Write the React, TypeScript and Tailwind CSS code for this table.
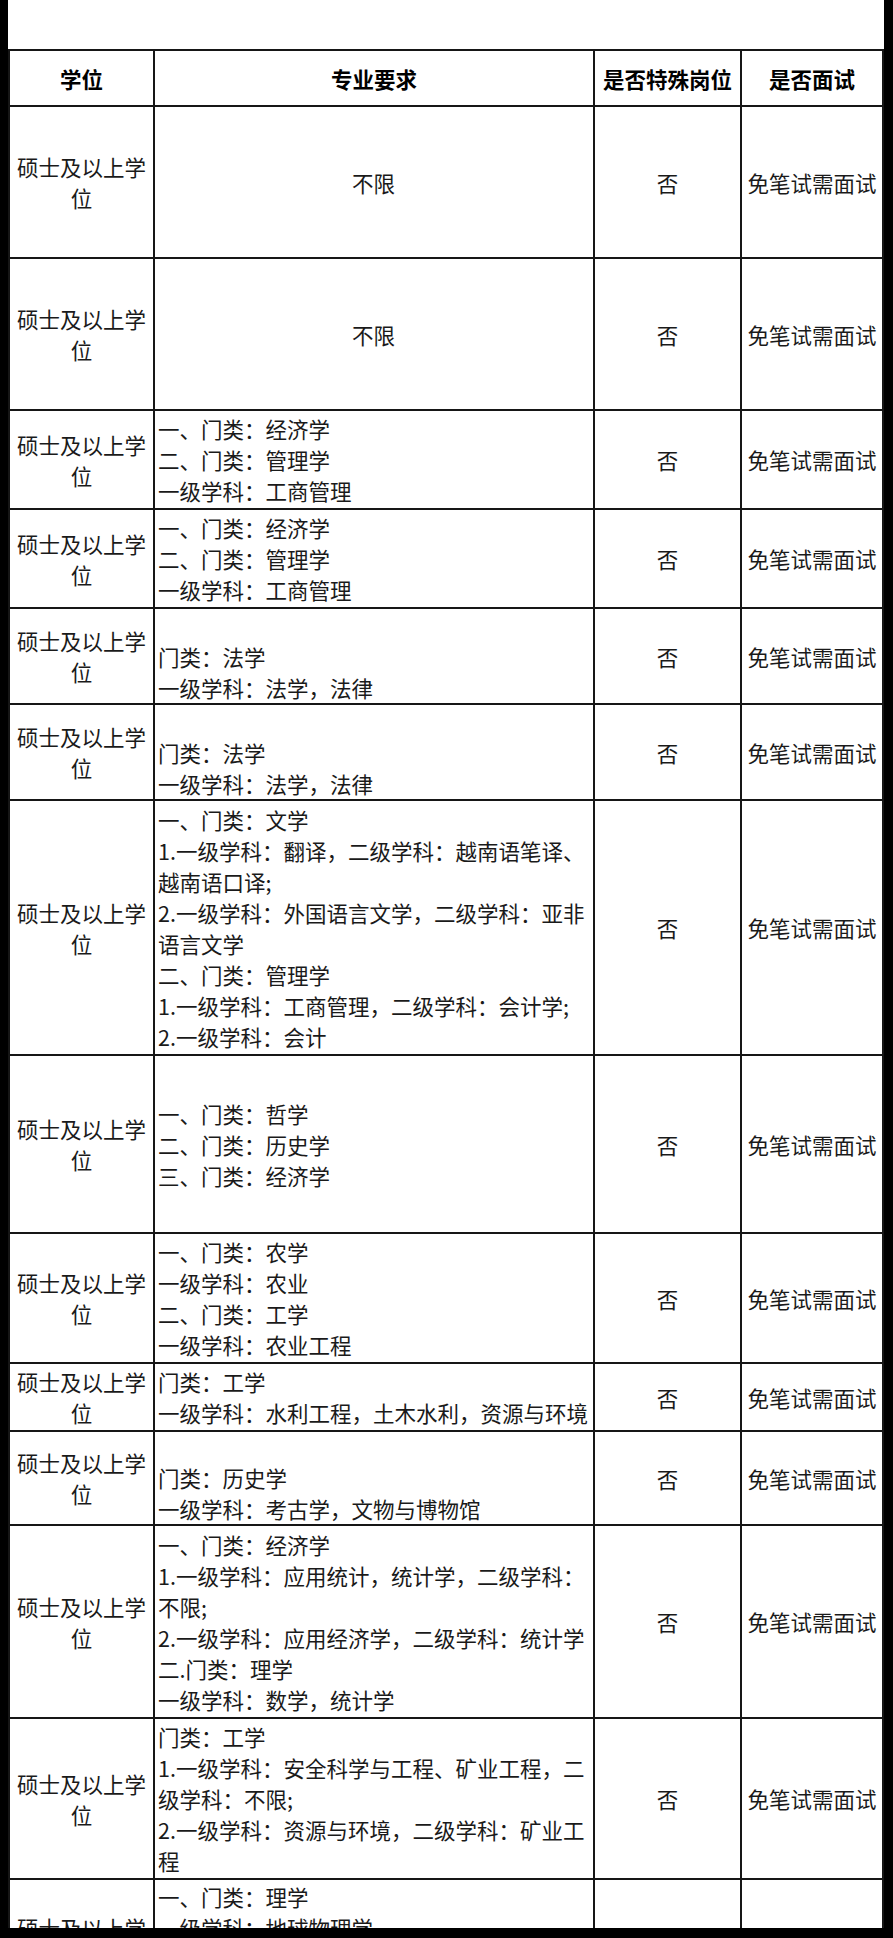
type Row = {
  h: string;
  major: string[];
  center?: boolean;
  valign?: string;
};

const rows: Row[] = [
  { h: 'h-[152px]', major: ['不限'], center: true },
  { h: 'h-[152px]', major: ['不限'], center: true },
  { h: 'h-[99px]', major: ['一、门类：经济学', '二、门类：管理学', '一级学科：工商管理'] },
  { h: 'h-[99px]', major: ['一、门类：经济学', '二、门类：管理学', '一级学科：工商管理'] },
  { h: 'h-[96px]', major: ['门类：法学', '一级学科：法学，法律'], valign: 'align-bottom' },
  { h: 'h-[96px]', major: ['门类：法学', '一级学科：法学，法律'], valign: 'align-bottom' },
  {
    h: 'h-[255px]',
    major: [
      '一、门类：文学',
      '1.一级学科：翻译，二级学科：越南语笔译、越南语口译;',
      '2.一级学科：外国语言文学，二级学科：亚非语言文学',
      '二、门类：管理学',
      '1.一级学科：工商管理，二级学科：会计学;',
      '2.一级学科：会计',
    ],
  },
  { h: 'h-[178px]', major: ['一、门类：哲学', '二、门类：历史学', '三、门类：经济学'] },
  { h: 'h-[130px]', major: ['一、门类：农学', '一级学科：农业', '二、门类：工学', '一级学科：农业工程'] },
  { h: 'h-[68px]', major: ['门类：工学', '一级学科：水利工程，土木水利，资源与环境'] },
  { h: 'h-[94px]', major: ['门类：历史学', '一级学科：考古学，文物与博物馆'], valign: 'align-bottom' },
  {
    h: 'h-[193px]',
    major: [
      '一、门类：经济学',
      '1.一级学科：应用统计，统计学，二级学科：不限;',
      '2.一级学科：应用经济学，二级学科：统计学',
      '二.门类：理学',
      '一级学科：数学，统计学',
    ],
  },
  {
    h: 'h-[161px]',
    major: [
      '门类：工学',
      '1.一级学科：安全科学与工程、矿业工程，二级学科：不限;',
      '2.一级学科：资源与环境，二级学科：矿业工程',
    ],
  },
  { h: 'h-[128px]', major: ['一、门类：理学', '一级学科：地球物理学'], valign: 'align-top' },
];

const cell = 'border-2 border-[#161616]';

export default function App() {
  return (
    <div className="h-[1938px] overflow-hidden bg-white border-l-8 border-r-[9px] border-b-[10px] border-black font-['Noto_Sans_CJK_SC',sans-serif]">
      <div className="h-[49px]" />
      <table className="w-full table-fixed border-collapse text-[21.5px] leading-[31px] text-[#1a1a1a]">
        <colgroup>
          <col className="w-[145px]" />
          <col className="w-[440px]" />
          <col className="w-[147px]" />
          <col />
        </colgroup>
        <thead>
          <tr className="h-[56px] font-bold text-black">
            <th className={cell}>学位</th>
            <th className={cell}>专业要求</th>
            <th className={cell}>是否特殊岗位</th>
            <th className={cell}>是否面试</th>
          </tr>
        </thead>
        <tbody>
          {rows.map((r, i) => (
            <tr key={i} className={r.h}>
              <td className={`${cell} px-0 text-center align-middle`}>硕士及以上学位</td>
              <td
                className={`${cell} ${r.center ? 'text-center' : 'text-left'} ${
                  r.valign ?? 'align-middle'
                } pl-[3px] pr-1 ${r.valign === 'align-top' ? 'pt-[1px]' : ''}`}
              >
                {r.major.map((line, j) => (
                  <div key={j}>{line}</div>
                ))}
              </td>
              <td className={`${cell} text-center align-middle`}>否</td>
              <td className={`${cell} px-0 text-center align-middle`}>免笔试需面试</td>
            </tr>
          ))}
        </tbody>
      </table>
    </div>
  );
}
